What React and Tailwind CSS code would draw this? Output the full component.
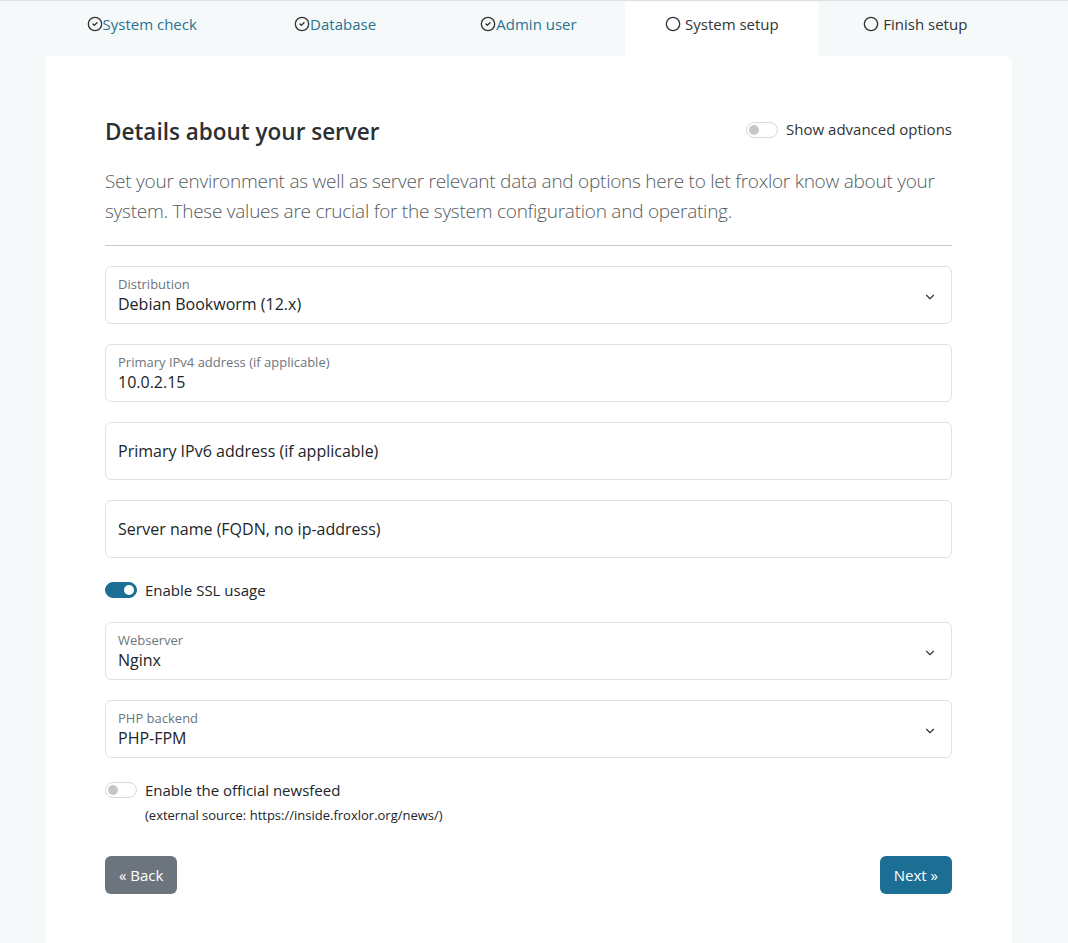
import React, { useState } from 'react';
import { CircleCheck, Circle, ChevronDown } from 'lucide-react';

const steps = [
  { label: 'System check', done: true },
  { label: 'Database', done: true },
  { label: 'Admin user', done: true },
  { label: 'System setup', active: true },
  { label: 'Finish setup' },
];

const Toggle = ({ on, onClick }) => (
  <button
    type="button"
    onClick={onClick}
    className={
      on
        ? 'w-8 h-4 rounded-full bg-[#1c6e94] border border-[#1c6e94] flex items-center justify-end px-[2px] shrink-0'
        : 'w-8 h-4 rounded-full bg-white border border-[#d6d9dc] flex items-center justify-start px-[2px] shrink-0'
    }
  >
    <span className={on ? 'w-[10px] h-[10px] rounded-full bg-white' : 'w-[10px] h-[10px] rounded-full bg-[#c4c6c8]'} />
  </button>
);

const SelectField = ({ label, value }) => (
  <div className="h-[58px] mb-5 border border-[#dee2e6] rounded-md pl-3 pr-[14px] pt-2 flex justify-between">
    <div>
      <div className="text-[13px] leading-[18px] text-[#6c757d]">{label}</div>
      <div className="text-base leading-[22px] text-[#212529]">{value}</div>
    </div>
    <ChevronDown className="w-[14px] h-[14px] mt-[15px] text-[#343a40]" strokeWidth={2} />
  </div>
);

const InputField = ({ label, value }) =>
  value ? (
    <div className="h-[58px] mb-5 border border-[#dee2e6] rounded-md px-3 pt-2">
      <div className="text-[13px] leading-[18px] text-[#6c757d]">{label}</div>
      <div className="text-base leading-[22px] text-[#212529]">{value}</div>
    </div>
  ) : (
    <div className="h-[58px] mb-5 border border-[#dee2e6] rounded-md px-3 flex items-center">
      <div className="text-base text-[#212529]">{label}</div>
    </div>
  );

export default function App() {
  const [advanced, setAdvanced] = useState(false);
  const [ssl, setSsl] = useState(true);
  const [news, setNews] = useState(false);

  return (
    <div className="min-h-[943px] bg-[#f5f9fa] border-t border-[#dde1e3]" style={{ fontFamily: '"Open Sans", "Noto Sans", sans-serif' }}>
      <div className="ml-[45px] w-[967px]">
        <div className="grid grid-cols-5 pt-px">
          {steps.map((s) => (
            <div
              key={s.label}
              className={
                s.active
                  ? 'h-[54px] bg-white flex justify-center pt-[10px] text-[15px] text-[#333]'
                  : 'h-[54px] flex justify-center pt-[10px] text-[15px] ' + (s.done ? 'text-[#2a7290]' : 'text-[#333]')
              }
            >
              <div className="flex items-start h-6 leading-6">
                {s.done ? (
                  <CircleCheck className="w-4 h-4 mt-1 text-[#333]" strokeWidth={2} />
                ) : (
                  <Circle className="w-4 h-4 mt-1 mr-[4px] text-[#333]" strokeWidth={2} />
                )}
                <span>{s.label}</span>
              </div>
            </div>
          ))}
        </div>

        <div className="bg-white rounded-tr-md px-[60px] pt-[61px] pb-[56px]">
          <div className="flex justify-between items-center">
            <h1 className="text-[22.5px] leading-[29px] font-semibold text-[#2b3033]">Details about your server</h1>
            <div className="flex items-center gap-2 mb-[4px] text-[15px] text-[#333]">
              <Toggle on={advanced} onClick={() => setAdvanced(!advanced)} />
              <span>Show advanced options</span>
            </div>
          </div>
          <p className="mt-5 text-[19px] leading-[30px] font-light tracking-[-0.25px] text-[#555b60]">
            Set your environment as well as server relevant data and options here to let froxlor know about your system. These values are crucial for the system configuration and operating.
          </p>
          <hr className="mt-[19px] mb-5 border-t border-[#c9cccf]" />

          <SelectField label="Distribution" value="Debian Bookworm (12.x)" />
          <InputField label="Primary IPv4 address (if applicable)" value="10.0.2.15" />
          <InputField label="Primary IPv6 address (if applicable)" />
          <InputField label="Server name (FQDN, no ip-address)" />

          <div className="h-6 mb-5 flex items-center gap-2 text-[15px] text-[#212529]">
            <Toggle on={ssl} onClick={() => setSsl(!ssl)} />
            <span>Enable SSL usage</span>
          </div>

          <SelectField label="Webserver" value="Nginx" />
          <SelectField label="PHP backend" value="PHP-FPM" />

          <div className="h-6 flex items-center gap-2 text-[15px] text-[#212529]">
            <Toggle on={news} onClick={() => setNews(!news)} />
            <span>Enable the official newsfeed</span>
          </div>
          <div className="pl-10 mt-[3px] text-[13px] leading-5 text-[#212529]">(external source: https://inside.froxlor.org/news/)</div>

          <div className="mt-[31px] flex justify-between">
            <button className="h-[38px] px-[14px] rounded-md bg-[#6c757d] text-white text-[15px]">« Back</button>
            <button className="h-[38px] px-[14px] rounded-md bg-[#1c6e94] text-white text-[15px]">Next »</button>
          </div>
        </div>
      </div>
    </div>
  );
}
